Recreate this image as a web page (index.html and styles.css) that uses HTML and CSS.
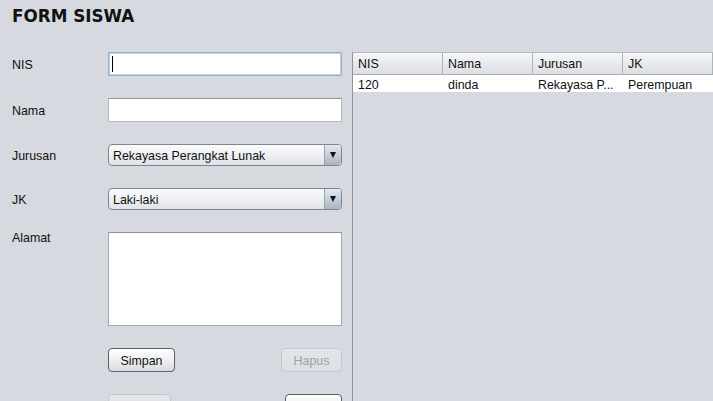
FILE: index.html
```html
<!DOCTYPE html>
<html>
<head>
<meta charset="utf-8">
<link rel="stylesheet" href="styles.css">
</head>
<body>
<div class="frame">
  <h1 class="title">FORM SISWA</h1>
  <div class="main">
    <div class="form">
      <div class="label">NIS</div>
      <div class="field focused"><span class="caret"></span></div>

      <div class="label">Nama</div>
      <div class="field"></div>

      <div class="label">Jurusan</div>
      <div class="combo"><span class="combo-text">Rekayasa Perangkat Lunak</span><span class="combo-btn"><span class="tri"></span></span></div>

      <div class="label">JK</div>
      <div class="combo"><span class="combo-text">Laki-laki</span><span class="combo-btn"><span class="tri"></span></span></div>

      <div class="label top">Alamat</div>
      <div class="area"></div>

      <div class="spacer"></div>
      <div class="btns">
        <button class="btn w67">Simpan</button>
        <button class="btn disabled w61">Hapus</button>
      </div>

      <div class="spacer"></div>
      <div class="btns">
        <button class="btn disabled w63"></button>
        <button class="btn w57"></button>
      </div>
    </div>

    <div class="pane">
      <div class="thead">
        <div class="th">NIS</div>
        <div class="th">Nama</div>
        <div class="th">Jurusan</div>
        <div class="th">JK</div>
      </div>
      <div class="tr">
        <div class="td">120</div>
        <div class="td">dinda</div>
        <div class="td">Rekayasa P...</div>
        <div class="td">Perempuan</div>
      </div>
    </div>
  </div>
</div>
</body>
</html>
```

FILE: styles.css
```css
html, body {
  margin: 0;
  padding: 0;
  background: #d6d9df;
  overflow: hidden;
}
body {
  width: 713px;
  height: 401px;
  font-family: "Liberation Sans", Arial, sans-serif;
  font-size: 12.4px;
  color: #111;
}
.frame {
  padding: 6px 0 0 12px;
}
.title {
  margin: 0;
  font-family: "DejaVu Sans", sans-serif;
  font-weight: bold;
  font-size: 16.8px;
  line-height: 20px;
  color: #111;
}
.main {
  display: flex;
  margin-top: 26px;
  align-items: flex-start;
}
.form {
  display: grid;
  grid-template-columns: 96px 234px;
  row-gap: 22px;
  align-items: center;
  flex: 0 0 330px;
}
.label {
  line-height: 16px;
  padding-top: 2px;
}
.label.top {
  align-self: start;
  padding-top: 0;
  margin-top: -2px;
}
.field {
  box-sizing: border-box;
  height: 24px;
  background: #fff;
  border: 1px solid #b6b9be;
  border-top-color: #8f9297;
  display: flex;
  align-items: center;
}
.field.focused {
  border: 1px solid #92b2d8;
  box-shadow: inset 0 0 0 1px #bccfe6;
}
.caret {
  display: block;
  width: 1px;
  height: 16px;
  background: #000;
  margin-left: 3px;
}
.combo {
  box-sizing: border-box;
  height: 22px;
  border: 1px solid #80848b;
  border-radius: 4px;
  background: linear-gradient(#fbfbfc, #eceef1 60%, #dfe2e6);
  display: flex;
  align-items: stretch;
  overflow: hidden;
}
.combo-text {
  flex: 1;
  padding-left: 4px;
  padding-top: 1px;
  line-height: 20px;
}
.combo-btn {
  width: 16px;
  border-left: 1px solid #9aa2ad;
  background: linear-gradient(#e3e8ef, #c3ccd8 55%, #aab5c4);
  display: flex;
  align-items: center;
  justify-content: center;
}
.tri {
  width: 0;
  height: 0;
  border-left: 3.5px solid transparent;
  border-right: 3.5px solid transparent;
  border-top: 6px solid #111;
}
.area {
  box-sizing: border-box;
  height: 94px;
  background: #fff;
  border: 1px solid #a4a7ad;
  border-top-color: #8f9297;
}
.spacer {
  height: 24px;
}
.btns {
  display: flex;
  justify-content: space-between;
  height: 24px;
}
.btn {
  box-sizing: border-box;
  height: 24px;
  padding: 1px 0 0;
  font-family: "Liberation Sans", Arial, sans-serif;
  font-size: 12.4px;
  color: #111;
  border: 1px solid #5d6067;
  border-radius: 4px;
  background: linear-gradient(#fdfdfd, #eff0f2 50%, #d8dbe0);
}
.btn.disabled {
  color: #9ca1a9;
  border-color: #c4c7cc;
  background: linear-gradient(#e3e5e9, #dcdfe4);
}
.w67 { width: 67px; }
.w61 { width: 61px; }
.w63 { width: 63px; }
.w57 { width: 57px; }
.pane {
  flex: 0 0 auto;
  width: 360px;
  height: 360px;
  margin-left: 10px;
  border-left: 1px solid #8f949b;
  border-top: 1px solid #b8bcc2;
  overflow: hidden;
}
.thead {
  display: flex;
  height: 21px;
  background: linear-gradient(#f6f7f8, #e8eaed 50%, #dcdfe3);
  border-bottom: 1px solid #a9adb3;
}
.th {
  box-sizing: border-box;
  flex: 0 0 90px;
  padding-left: 5px;
  padding-top: 1px;
  line-height: 21px;
  border-right: 1px solid #b0b4ba;
}
.tr {
  display: flex;
  height: 17px;
  background: #fff;
}
.td {
  box-sizing: border-box;
  flex: 0 0 90px;
  padding-left: 5px;
  padding-top: 2px;
  line-height: 17px;
}
```
